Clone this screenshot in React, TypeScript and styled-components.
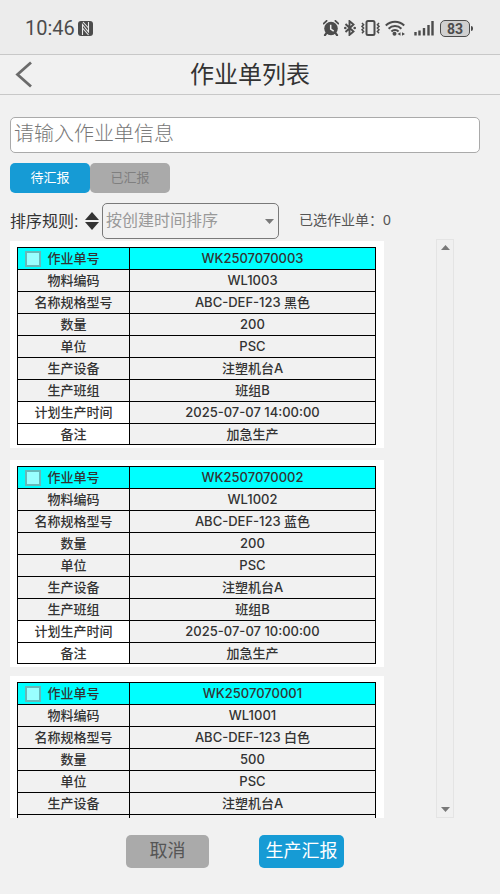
import React, { useRef, useState } from "react";
import styled, { createGlobalStyle, css } from "styled-components";

const sans = `"Liberation Sans", "Noto Sans CJK SC", sans-serif`;

const GlobalStyle = createGlobalStyle`
  *, *::before, *::after { box-sizing: border-box; }
  body { margin: 0; background: #f1f1f1; color: #333; font-family: ${sans}; }
  button, input, select { font: inherit; color: inherit; }
  button { padding: 0; border: 0; background: none; cursor: pointer; }
`;

const Page = styled.div`
  display: flex;
  flex-direction: column;
  height: 100vh;
  background: #f1f1f1;
`;

const StatusBar = styled.div`
  display: flex;
  align-items: center;
  justify-content: space-between;
  flex: none;
  height: 55px;
  padding: 2px 27px 0 25px;
  background: #ececec;
  border-bottom: 1px solid #c8c8c8;
  color: #4c4c4c;
`;

const StatusGroup = styled.div<{ $gap: number }>`
  display: flex;
  align-items: center;
  gap: ${(p) => p.$gap}px;
`;

const Clock = styled.span`
  font: 400 20px/24px Roboto, sans-serif;
`;

const SignalBox = styled.div`
  display: flex;
  align-items: center;
  gap: 6px;
  margin-left: 4px;
`;

const BatteryBox = styled.div`
  display: flex;
  align-items: center;
  gap: 1px;
`;

const BatteryBody = styled.span`
  width: 30px;
  height: 17px;
  border: 1px solid #4c4c4c;
  border-radius: 5px;
  background: #d0d0d0;
  font: 700 14px/16px Roboto, sans-serif;
  text-align: center;
`;

const BatteryNub = styled.span`
  width: 2px;
  height: 5px;
  border-radius: 0 2px 2px 0;
  background: #4c4c4c;
`;

const Header = styled.header`
  display: grid;
  grid-template-columns: 48px 1fr 48px;
  align-items: center;
  flex: none;
  height: 40px;
  border-bottom: 1px solid #c8c8c8;
`;

const BackButton = styled.button`
  display: flex;
  align-items: center;
  height: 39px;
  padding-left: 15px;
`;

const Title = styled.h1`
  margin: 0;
  text-align: center;
  font-size: 24px;
  font-weight: 400;
  line-height: 38px;
`;

const Filters = styled.section`
  display: flex;
  flex-direction: column;
  gap: 10px;
  flex: none;
  padding: 22px 20px 0 10px;
`;

const SearchInput = styled.input`
  width: 100%;
  height: 36px;
  padding: 0 3px 2px;
  border: 1px solid #aaa;
  border-radius: 5px;
  background: #fff;
  font-size: 20px;
  font-weight: 300;
  &::placeholder { color: #777; opacity: 1; }
`;

const Tabs = styled.div`
  display: flex;
`;

const Tab = styled.button<{ $active: boolean }>`
  width: 80px;
  height: 30px;
  border-radius: 5px;
  font-size: 13px;
  line-height: 28px;
  ${(p) =>
    p.$active
      ? css`background: #169bd5; color: #fff;`
      : css`background: #aaa; color: #7f7f7f;`}
`;

const SortRow = styled.div`
  display: flex;
  align-items: center;
  height: 36px;
`;

const SortLabel = styled.label`
  width: 75px;
  flex: none;
  padding-bottom: 2px;
  font-size: 16px;
  white-space: nowrap;
`;

const SortButton = styled.button`
  display: flex;
  flex: none;
  margin-right: 3px;
`;

const SelectWrap = styled.div`
  position: relative;
  flex: 0 1 177px;
`;

const SortSelect = styled.select`
  width: 100%;
  height: 36px;
  padding: 0 24px 2px 3px;
  border: 1px solid #797979;
  border-radius: 5px;
  background: transparent;
  appearance: none;
  font-size: 16px;
  color: #999;
`;

const SelectArrow = styled.svg`
  position: absolute;
  right: 5px;
  top: 16px;
  pointer-events: none;
`;

const SelectedCount = styled.span`
  margin-left: 20px;
  padding-bottom: 2px;
  color: #555;
  font-size: 14px;
  line-height: 34px;
  white-space: nowrap;
`;

const ListArea = styled.main`
  display: grid;
  grid-template-columns: minmax(0, 1fr) 18px;
  grid-template-rows: minmax(0, 1fr);
  gap: 52px;
  flex: 1;
  min-height: 0;
  padding: 0 46px 0 10px;
`;

const OrderList = styled.div`
  margin-top: 2px;
  overflow-y: auto;
  scrollbar-width: none;
`;

const Card = styled.article`
  padding: 6px 8px 3px 7px;
  background: #fff;
  & + & { margin-top: 12px; }
  & + & + & { margin-top: 9px; }
`;

const OrderTable = styled.table`
  width: 100%;
  table-layout: fixed;
  border-collapse: separate;
  border-spacing: 0;
  border: solid #000;
  border-width: 1px 0 0 1px;
  font-family: Inter, "Noto Sans CJK SC", sans-serif;
  font-size: 13px;
  line-height: 19px;
`;

const OrderRow = styled.tr<{ $head?: boolean }>`
  height: 22px;
  background: ${(p) => (p.$head ? "#0ff" : "#f1f1f1")};
  &:last-child { height: 21px; }
`;

const cell = css`
  padding: 0;
  border: solid #000;
  border-width: 0 1px 1px 0;
  font-weight: 500;
  text-align: center;
  white-space: nowrap;
`;

const LabelCell = styled.th<{ $plain?: boolean }>`
  ${cell}
  width: 112px;
  ${(p) => p.$plain && css`background: #fff;`}
`;

const ValueCell = styled.td`
  ${cell}
`;

const PickLabel = styled.label`
  display: grid;
  grid-template-columns: 1fr auto 1fr;
  align-items: center;
  padding: 0 7px;
`;

const Pick = styled.input`
  appearance: none;
  width: 16px;
  height: 16px;
  margin: 0;
  border: 2px solid #66b8b8;
  background: #99ffff;
  &:checked { background: #169bd5; }
`;

const ScrollTrack = styled.div`
  display: flex;
  flex-direction: column;
  justify-content: space-between;
  border: 1px solid #e4e4e4;
  background: #f0f0f0;
`;

const ScrollButton = styled.button`
  display: flex;
  align-items: center;
  justify-content: center;
  height: 15px;
`;

const Footer = styled.footer`
  display: flex;
  justify-content: center;
  gap: 50px;
  flex: none;
  padding: 17px 30px 26px 0;
`;

const ActionButton = styled.button<{ $primary?: boolean }>`
  min-width: ${(p) => (p.$primary ? 85 : 83)}px;
  height: 33px;
  border-radius: 5px;
  background: ${(p) => (p.$primary ? "#169bd5" : "#aaa")};
  color: ${(p) => (p.$primary ? "#fff" : "#555")};
  font-size: 18px;
  line-height: 31px;
`;

const NfcIcon = () => (
  <svg width="15" height="15" viewBox="0 0 15 15">
    <rect width="15" height="15" rx="3" fill="#4c4c4c" />
    <path d="M4.5 14V3.5L10.5 11V1M4.5 7l6 7M5 1l5.5 6" fill="none" stroke="#ececec" strokeWidth="1.1" />
  </svg>
);

const AlarmIcon = () => (
  <svg width="16" height="16" viewBox="0 0 16 16">
    <circle cx="8" cy="8.5" r="6.8" fill="#4c4c4c" />
    <path d="M.6 3.6 3.6 .8M15.4 3.6 12.4 .8" stroke="#4c4c4c" strokeWidth="1.8" strokeLinecap="round" />
    <path d="M3.5 13l-1.5 2.2M12.5 13l1.5 2.2" stroke="#4c4c4c" strokeWidth="2.2" strokeLinecap="round" />
    <path d="M7.7 4.8v4.2l3 2.2" fill="none" stroke="#ececec" strokeWidth="1.5" />
  </svg>
);

const BluetoothIcon = () => (
  <svg width="12" height="16" viewBox="0 0 12 16">
    <path d="M1.5 4l8 7.5-4 3.4V1.1L9.5 4.5l-8 7.5" fill="none" stroke="#4c4c4c" strokeWidth="1.9" />
    <circle cx="1.3" cy="8" r="1.3" fill="#4c4c4c" />
    <circle cx="10.7" cy="8" r="1.3" fill="#4c4c4c" />
  </svg>
);

const VibrateIcon = () => (
  <svg width="19" height="16" viewBox="0 0 19 16">
    <rect x="5.5" y="1" width="8" height="14" rx="1.5" fill="none" stroke="#4c4c4c" strokeWidth="2" />
    <path d="M1 3l1.6 1.7L1 6.4l1.6 1.7L1 9.8l1.6 1.7L1 13.2M18 3l-1.6 1.7L18 6.4l-1.6 1.7L18 9.8l-1.6 1.7L18 13.2" fill="none" stroke="#4c4c4c" strokeWidth="1.5" />
  </svg>
);

const WifiIcon = () => (
  <svg width="20" height="16" viewBox="0 0 20 16">
    <path d="M.8 5.5a13 13 0 0 1 18.4 0M3.6 8.7a9 9 0 0 1 12.8 0M6.4 11.5a5 5 0 0 1 7.2 0" fill="none" stroke="#4c4c4c" strokeWidth="2" />
    <circle cx="9.5" cy="13.8" r="2" fill="#4c4c4c" />
    <path d="M12.5 14l3-1.8v3.6zM20 14l-3-1.8v3.6z" fill="#4c4c4c" />
  </svg>
);

const SignalIcon = () => (
  <svg width="20" height="16" viewBox="0 0 20 16">
    <path d="M1.5 12v3.5M5.5 10.5v5M10 8v7.5M14.5 5v10.5M18.500 1v14.500" stroke="#4c4c4c" strokeWidth="2.4" />
  </svg>
);

interface WorkOrder {
  id: string;
  material: string;
  spec: string;
  quantity: string;
  time: string;
}

const orders: WorkOrder[] = [
  { id: "WK2507070003", material: "WL1003", spec: "ABC-DEF-123 黑色", quantity: "200", time: "2025-07-07 14:00:00" },
  { id: "WK2507070002", material: "WL1002", spec: "ABC-DEF-123 蓝色", quantity: "200", time: "2025-07-07 10:00:00" },
  { id: "WK2507070001", material: "WL1001", spec: "ABC-DEF-123 白色", quantity: "500", time: "2025-07-07 08:00:00" },
];

interface OrderCardProps {
  order: WorkOrder;
  checked: boolean;
  onToggle: () => void;
}

function OrderCard({ order, checked, onToggle }: OrderCardProps) {
  const rows: [string, string, boolean?][] = [
    ["物料编码", order.material],
    ["名称规格型号", order.spec],
    ["数量", order.quantity],
    ["单位", "PSC"],
    ["生产设备", "注塑机台A"],
    ["生产班组", "班组B"],
    ["计划生产时间", order.time, true],
    ["备注", "加急生产", true],
  ];
  return (
    <Card>
      <OrderTable>
        <tbody>
          <OrderRow $head>
            <LabelCell scope="row">
              <PickLabel>
                <Pick type="checkbox" checked={checked} onChange={onToggle} />
                作业单号
              </PickLabel>
            </LabelCell>
            <ValueCell>{order.id}</ValueCell>
          </OrderRow>
          {rows.map(([label, value, plain]) => (
            <OrderRow key={label}>
              <LabelCell scope="row" $plain={plain}>{label}</LabelCell>
              <ValueCell>{value}</ValueCell>
            </OrderRow>
          ))}
        </tbody>
      </OrderTable>
    </Card>
  );
}

export default function App() {
  const [tab, setTab] = useState(0);
  const [picked, setPicked] = useState<string[]>([]);
  const [descending, setDescending] = useState(true);
  const listRef = useRef<HTMLDivElement>(null);

  const toggle = (id: string) =>
    setPicked((p) => (p.includes(id) ? p.filter((x) => x !== id) : [...p, id]));
  const scroll = (top: number) => listRef.current?.scrollBy({ top, behavior: "smooth" });
  const shown = descending ? orders : [...orders].reverse();

  return (
    <Page>
      <GlobalStyle />
      <StatusBar>
        <StatusGroup $gap={3}>
          <Clock>10:46</Clock>
          <NfcIcon />
        </StatusGroup>
        <StatusGroup $gap={5}>
          <AlarmIcon />
          <BluetoothIcon />
          <VibrateIcon />
          <WifiIcon />
          <SignalBox>
            <SignalIcon />
            <BatteryBox>
              <BatteryBody>83</BatteryBody>
              <BatteryNub />
            </BatteryBox>
          </SignalBox>
        </StatusGroup>
      </StatusBar>

      <Header>
        <BackButton aria-label="返回">
          <svg width="18" height="28" viewBox="0 0 18 28">
            <path d="M16 1.500 2.500 13.500 16 25.500" fill="none" stroke="#6b6b6b" strokeWidth="2.800" />
          </svg>
        </BackButton>
        <Title>作业单列表</Title>
      </Header>

      <Filters>
        <SearchInput type="text" aria-label="作业单信息" placeholder="请输入作业单信息" />
        <Tabs>
          {["待汇报", "已汇报"].map((name, i) => (
            <Tab key={name} $active={tab === i} onClick={() => setTab(i)}>{name}</Tab>
          ))}
        </Tabs>
        <SortRow>
          <SortLabel htmlFor="sort">排序规则:</SortLabel>
          <SortButton aria-label="切换排序方向" onClick={() => setDescending((d) => !d)}>
            <svg width="14" height="18" viewBox="0 0 14 18">
              <path d="M0 8 7 0l7 8zM0 10h14l-7 8z" fill="#333" />
            </svg>
          </SortButton>
          <SelectWrap>
            <SortSelect id="sort">
              <option>按创建时间排序</option>
            </SortSelect>
            <SelectArrow width="9" height="5" viewBox="0 0 9 5">
              <path d="M0 0h9L4.5 5z" fill="#797979" />
            </SelectArrow>
          </SelectWrap>
          <SelectedCount>已选作业单：{picked.length}</SelectedCount>
        </SortRow>
      </Filters>

      <ListArea>
        <OrderList ref={listRef}>
          {shown.map((o) => (
            <OrderCard key={o.id} order={o} checked={picked.includes(o.id)} onToggle={() => toggle(o.id)} />
          ))}
        </OrderList>
        <ScrollTrack>
          <ScrollButton aria-label="向上滚动" onClick={() => scroll(-100)}>
            <svg width="9" height="5" viewBox="0 0 9 5"><path d="M0 5h9L4.5 0z" fill="#797979" /></svg>
          </ScrollButton>
          <ScrollButton aria-label="向下滚动" onClick={() => scroll(100)}>
            <svg width="9" height="5" viewBox="0 0 9 5"><path d="M0 0h9L4.5 5z" fill="#797979" /></svg>
          </ScrollButton>
        </ScrollTrack>
      </ListArea>

      <Footer>
        <ActionButton>取消</ActionButton>
        <ActionButton $primary>生产汇报</ActionButton>
      </Footer>
    </Page>
  );
}
